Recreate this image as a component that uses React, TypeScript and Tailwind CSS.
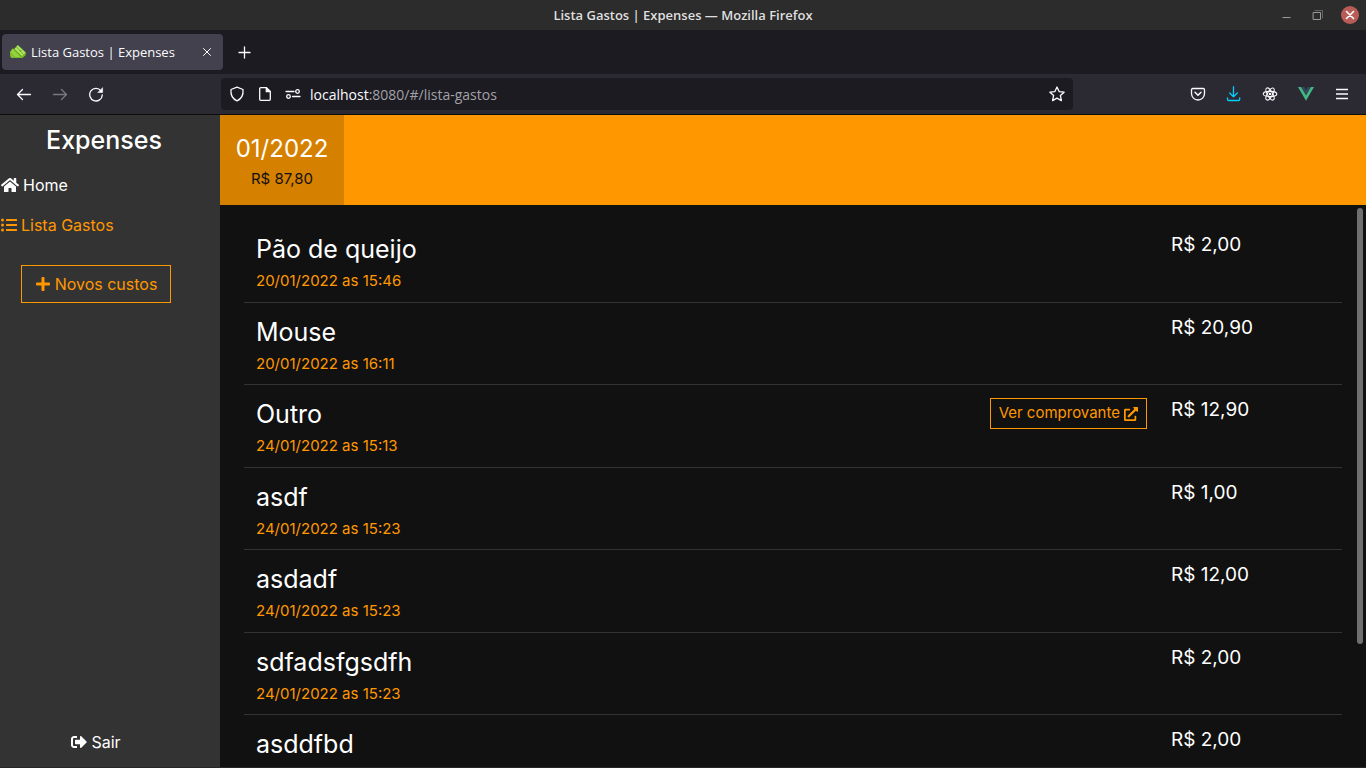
import React from "react";
import {
  FaExternalLinkAlt,
  FaHome,
  FaListUl,
  FaPlus,
  FaSignOutAlt,
} from "react-icons/fa";

type Expense = { title: string; date: string; value: string; receipt?: boolean };

const expenses: Expense[] = [
  { title: "Pão de queijo", date: "20/01/2022 as 15:46", value: "R$ 2,00" },
  { title: "Mouse", date: "20/01/2022 as 16:11", value: "R$ 20,90" },
  { title: "Outro", date: "24/01/2022 as 15:13", value: "R$ 12,90", receipt: true },
  { title: "asdf", date: "24/01/2022 as 15:23", value: "R$ 1,00" },
  { title: "asdadf", date: "24/01/2022 as 15:23", value: "R$ 12,00" },
  { title: "sdfadsfgsdfh", date: "24/01/2022 as 15:23", value: "R$ 2,00" },
  { title: "asddfbd", date: "24/01/2022 as 15:23", value: "R$ 2,00" },
];

function Icon({ children, className = "" }: { children: React.ReactNode; className?: string }) {
  return (
    <svg
      viewBox="0 0 16 16"
      className={`size-4 shrink-0 ${className}`}
      fill="none"
      stroke="currentColor"
      strokeWidth="1.3"
      strokeLinecap="round"
      strokeLinejoin="round"
      aria-hidden="true"
    >
      {children}
    </svg>
  );
}

function TitleBar() {
  return (
    <div className="grid h-[30px] shrink-0 grid-cols-[1fr_auto_1fr] items-center bg-[#2c2c2c]">
      <span className="col-start-2 pt-0.5 text-[13px] font-semibold text-[#dfdfdf]">
        Lista Gastos | Expenses — Mozilla Firefox
      </span>
      <div className="flex items-center justify-end gap-[15px] pr-[7px] text-[#9a9a9a]">
        <button aria-label="Minimizar">
          <Icon>
            <path d="M3.5 10.5h8" strokeWidth="1" strokeLinecap="butt" />
          </Icon>
        </button>
        <button aria-label="Restaurar">
          <Icon>
            <path d="M3.5 5.5h7v7h-7z" strokeWidth="1" strokeLinejoin="miter" />
            <path d="M5 3.5h7.500V11" strokeWidth="1" strokeLinejoin="miter" opacity="0.5" />
          </Icon>
        </button>
        <button
          aria-label="Fechar janela"
          className="flex size-[18px] items-center justify-center rounded-full bg-[#b85c57] text-white"
        >
          <Icon>
            <path d="M4.5 4.5l7 7M11.5 4.5l-7 7" strokeWidth="1.6" />
          </Icon>
        </button>
      </div>
    </div>
  );
}

function TabBar() {
  return (
    <div className="flex h-11 shrink-0 items-center gap-[13px] bg-[#1c1b22] px-0.5 text-[#fbfbfe]">
      <div className="flex h-9 w-[221px] items-center gap-1 rounded bg-[#42414d] pr-2 pl-2">
        <svg viewBox="0 0 16 16" className="size-4 shrink-0" aria-hidden="true">
          <path d="M0 8l2.300-3.500 2.200.2L7.800 1l8 7.500v2.500L12.500 14H1.300L0 12z" fill="#76b82a" />
          <path d="M4.500 5L7.800 1.200 15.500 8.500 12 12z" fill="#b0e35e" />
          <path d="M.5 8L2.700 5l8 8H1.500z" fill="#93d13d" />
          <path d="M4 5l8 8M6.500 3l7 7.500M1 9.500L4.500 13M9 6.500l3 .5" stroke="#5c9a1d" strokeWidth=".7" fill="none" />
        </svg>
        <span className="grow pt-0.5 pl-px text-[13px]">Lista Gastos | Expenses</span>
        <button aria-label="Fechar aba">
          <Icon>
            <path d="M4.500 4.500l7 7M11.500 4.500l-7 7" strokeWidth="1" />
          </Icon>
        </button>
      </div>
      <button aria-label="Nova aba">
        <Icon>
          <path d="M8.500 3v11M3 8.500h11" />
        </Icon>
      </button>
    </div>
  );
}

function Toolbar() {
  return (
    <div className="flex h-[41px] shrink-0 items-center border-b border-[#0c0c0d] bg-[#2b2a33] text-[#fbfbfe]">
      <div className="flex w-[221px] shrink-0 items-center gap-5 pl-4">
        <button aria-label="Voltar">
          <Icon>
            <path d="M1.500 8.500h13M6.500 3.500l-5 5 5 5" />
          </Icon>
        </button>
        <button aria-label="Avançar" disabled className="text-[#79787f]">
          <Icon>
            <path d="M1.500 8.500h13M9.500 3.500l5 5-5 5" />
          </Icon>
        </button>
        <button aria-label="Recarregar">
          <Icon>
            <path d="M13 4.800A6.300 6.300 0 1 0 14.300 9" />
            <path d="M14.600 2v4.500h-4.500z" fill="currentColor" strokeWidth=".6" />
          </Icon>
        </button>
      </div>
      <div className="flex h-8 w-[852px] shrink items-center gap-[9px] rounded bg-[#1c1b22] px-2">
        <div className="flex items-center gap-3">
          <Icon>
            <path d="M8 1.200l6 2.300c.5 5.400-1.500 9.400-6 11.300-4.500-1.900-6.500-5.900-6-11.300z" />
          </Icon>
          <Icon>
            <path d="M3.700 1.700h5.800l3.800 3.800v7.800a1 1 0 0 1-1 1H3.700a1 1 0 0 1-1-1V2.700a1 1 0 0 1 1-1z" />
            <path d="M9.300 2v3.700H13z" fill="currentColor" />
          </Icon>
          <Icon>
            <path d="M1 5.500h8M7.500 10.500H15" />
            <circle cx="12.500" cy="5.500" r="1.800" />
            <circle cx="3.500" cy="10.500" r="1.800" />
          </Icon>
        </div>
        <div className="relative flex h-8 grow items-center text-sm">
          <span aria-hidden="true" className="pt-0.5 whitespace-pre text-[#a2a2a8]">
            <span className="text-[#fbfbfe]">localhost</span>:8080/#/lista-gastos
          </span>
          <input
            type="text"
            aria-label="Endereço"
            className="absolute inset-0 w-full bg-transparent outline-none"
          />
        </div>
        <button aria-label="Favoritar página">
          <Icon>
            <path d="M8 1l2.100 4.600 5 .6-3.700 3.400 1 5L8 12.100l-4.400 2.500 1-5L.9 6.200l5-.6z" />
          </Icon>
        </button>
      </div>
      <div className="flex grow items-center justify-end gap-5 pr-4">
        <button aria-label="Pocket">
          <Icon>
            <path d="M2.700 2.500h10.600a1.200 1.200 0 0 1 1.200 1.200V7.500a6.500 6.500 0 0 1-13 0V3.700a1.200 1.200 0 0 1 1.200-1.200z" />
            <path d="M5 6.300l3 2.900 3-2.900" strokeWidth="1.500" />
          </Icon>
        </button>
        <button aria-label="Downloads" className="text-[#00cfff]">
          <Icon>
            <path d="M7.500 .7v10M3.700 7L7.500 10.700 11.300 7M1.500 11.800v1.500a1.200 1.200 0 0 0 1.200 1.200h9.800a1.200 1.200 0 0 0 1.200-1.200v-1.500" />
          </Icon>
        </button>
        <button aria-label="React Developer Tools">
          <Icon>
            <g strokeWidth="1.1">
              <ellipse cx="8" cy="8" rx="6.800" ry="2.600" />
              <ellipse cx="8" cy="8" rx="6.800" ry="2.600" transform="rotate(60 8 8)" />
              <ellipse cx="8" cy="8" rx="6.800" ry="2.600" transform="rotate(120 8 8)" />
            </g>
            <circle cx="8" cy="8" r="1.300" fill="currentColor" stroke="none" />
          </Icon>
        </button>
        <button aria-label="Vue.js devtools">
          <svg viewBox="0 0 16 16" className="size-4" aria-hidden="true">
            <path d="M0 1h3.200L8 9.300 12.800 1H16L8 14.800z" fill="#41b883" />
            <path d="M3.200 1h3L8 4.100 9.800 1h3L8 9.300z" fill="#35495e" />
          </svg>
        </button>
        <button aria-label="Menu">
          <Icon>
            <path d="M2 3.500h12M2 8h12M2 12.500h12" strokeLinecap="butt" />
          </Icon>
        </button>
      </div>
    </div>
  );
}

function Sidebar() {
  return (
    <aside className="flex w-[220px] shrink-0 flex-col bg-[#333] text-white">
      <h1 className="mr-3 flex h-[50px] items-center justify-center pt-0.5 text-[25px] font-medium">
        Expenses
      </h1>
      <nav className="flex flex-col">
        <a href="#/" className="flex h-10 items-center gap-1 pl-px">
          <FaHome className="h-4 w-[18px]" /> Home
        </a>
        <a href="#/lista-gastos" className="flex h-10 items-center gap-1 pl-px text-[#ff9800]">
          <FaListUl /> Lista Gastos
        </a>
      </nav>
      <div className="flex grow flex-col items-center justify-between pt-5 pr-7 pb-[13px]">
        <button className="flex h-[38px] w-[150px] items-center justify-center gap-1 border border-[#ff9800] text-[#ff9800]">
          <FaPlus className="shrink-0" /> Novos custos
        </button>
        <a href="#/sair" className="flex items-center gap-1">
          <FaSignOutAlt /> Sair
        </a>
      </div>
    </aside>
  );
}

function ExpenseRow({ title, date, value, receipt }: Expense) {
  return (
    <li className="grid shrink-0 grid-cols-12 border-b border-[#333] pt-[13px] odd:h-[83px] even:h-[82px]">
      <div className="col-span-8 px-3">
        <h2 className="text-[25px] leading-8">{title}</h2>
        <p className="text-[15px] leading-8 text-[#ff9800]">{date}</p>
      </div>
      <div className="col-span-2 flex items-start justify-end px-3">
        {receipt && (
          <button className="flex h-[31px] items-center gap-1 border border-[#ff9800] px-2 text-[15px] whitespace-nowrap text-[#ff9800]">
            Ver comprovante <FaExternalLinkAlt className="size-3.5" />
          </button>
        )}
      </div>
      <p className="col-span-2 px-3 text-[19px] leading-6">{value}</p>
    </li>
  );
}

export default function App() {
  return (
    <div className="flex h-screen flex-col overflow-hidden bg-[#111] font-['Open_Sans',sans-serif]">
      <TitleBar />
      <TabBar />
      <Toolbar />
      <div className="flex min-h-0 grow border-b border-[#2a2629] font-[Inter,sans-serif]">
        <Sidebar />
        <main className="flex min-w-0 grow flex-col text-white">
          <header className="flex h-[90px] shrink-0 bg-[#ff9800]">
            <button className="flex w-[124px] flex-col items-center justify-center bg-[#d68000] pt-0.5">
              <span className="text-2xl leading-9">01/2022</span>
              <span className="text-[15px] leading-6 text-[#111]">R$ 87,80</span>
            </button>
          </header>
          <div className="flex min-h-0 grow">
            <ul className="flex min-w-0 grow flex-col overflow-y-auto pt-[15px] pr-3 pl-6 [scrollbar-width:none]">
              {expenses.map((expense, index) => (
                <ExpenseRow key={index} {...expense} />
              ))}
            </ul>
            <div className="w-3 shrink-0 pt-[3px] pr-[3px] pl-[3px]">
              <div className="h-[78%] rounded-full bg-[#6f6f6f]" />
            </div>
          </div>
        </main>
      </div>
    </div>
  );
}
